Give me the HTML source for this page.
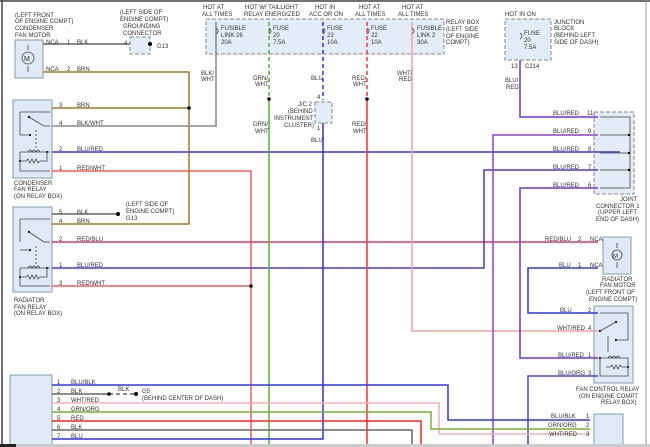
<!DOCTYPE html><html><head><style>
html,body{margin:0;padding:0;background:#fff;width:650px;height:447px;overflow:hidden}
svg{display:block}
text{font-family:"Liberation Sans",sans-serif;font-size:6px;fill:#333}
</style></head><body>
<svg width="650" height="447" viewBox="0 0 650 447">
<rect x="0" y="0" width="650" height="447" fill="#fff"/>
<line x1="2" y1="0" x2="2" y2="447" stroke="#444" stroke-width="1.5"/>
<line x1="0" y1="1" x2="650" y2="1" stroke="#444" stroke-width="1.5"/>
<line x1="646" y1="0" x2="646" y2="447" stroke="#999" stroke-width="1"/>
<g fill="#dfeaf6" stroke="#8a98a8" stroke-width="1">
<rect x="15" y="40" width="28" height="38"/>
<rect x="13" y="100" width="39" height="78"/>
<rect x="13" y="207" width="39" height="85"/>
<rect x="10" y="375" width="42" height="72"/>
<rect x="603" y="237" width="28" height="37"/>
<rect x="594" y="306" width="39" height="77"/>
<rect x="594" y="414" width="29" height="33"/>
</g>
<g fill="#e3edf7" stroke="#888" stroke-width="1" stroke-dasharray="4,2">
<rect x="206" y="19" width="238" height="35"/>
<rect x="130" y="37" width="20" height="17"/>
<rect x="505" y="19" width="46" height="41"/>
<rect x="594" y="112" width="40" height="82"/>
<rect x="315" y="102" width="17" height="21"/>
</g>
<g fill="none" stroke-width="1.5">
<path d="M43 44H130" stroke="#666"/>
<path d="M43 72H189V224H52" stroke="#a07a2a"/>
<path d="M52 108H189" stroke="#a07a2a"/>
<path d="M52 126H216V22" stroke="#888"/>
<path d="M52 152H620" stroke="#4434e8"/>
<path d="M52 171H251V444" stroke="#ff5a5a"/>
<path d="M52 214H118" stroke="#666"/>
<path d="M52 242H598" stroke="#d8386a"/>
<path d="M52 268H484V170H598" stroke="#4a34e8"/>
<path d="M52 286H251" stroke="#ff5a5a"/>
<path d="M269 22V100" stroke="#4cb030" stroke-dasharray="4,3"/>
<path d="M269 100V444" stroke="#5ab038"/>
<path d="M323 22V100" stroke="#2e2ef0" stroke-dasharray="4,3"/>
<path d="M323 123V439H52" stroke="#2e2ef0"/>
<path d="M367 22V100" stroke="#ff3030" stroke-dasharray="4,3"/>
<path d="M367 100V444" stroke="#ff3030"/>
<path d="M412 22V331H598" stroke="#f4a0a0"/>
<path d="M520 60V117H598" stroke="#6a34e0"/>
<path d="M493 444V135H598" stroke="#8a40d0"/>
<path d="M598 188H520V358H598" stroke="#6a34e0"/>
<path d="M598 268H528V313H598" stroke="#3434e8"/>
<path d="M528 444V376H598" stroke="#4a40e0"/>
<path d="M52 385H448V420H590" stroke="#3434e8"/>
<path d="M52 394H109" stroke="#666"/>
<path d="M109 394H136" stroke="#666" stroke-dasharray="4,3"/>
<path d="M52 403H439V434H590" stroke="#f4b0b0"/>
<path d="M52 412H431V429H590" stroke="#7ab030"/>
<path d="M52 421H421V444" stroke="#ff2020"/>
<path d="M52 430H412V444" stroke="#666"/>
<path d="M600 117H630V188H600M600 135H630M600 153H630M600 170H630" stroke="#666" stroke-width="1"/>
</g>
<g fill="#000">
<circle cx="189" cy="108" r="1.8"/><circle cx="251" cy="286" r="1.8"/><circle cx="269" cy="99" r="1.8"/><circle cx="367" cy="99" r="1.8"/>
<circle cx="118" cy="214" r="2"/><circle cx="109" cy="394" r="1.8"/><circle cx="136" cy="394" r="2"/><circle cx="150" cy="44" r="2"/>
<circle cx="629" cy="135" r="1.2"/><circle cx="629" cy="153" r="1.2"/><circle cx="629" cy="170" r="1.2"/>
<circle cx="29" cy="117" r="1.1"/><circle cx="30" cy="135" r="1.1"/><circle cx="47" cy="152" r="1.1"/><circle cx="20" cy="161" r="1.1"/>
<circle cx="29" cy="232" r="1.1"/><circle cx="30" cy="250" r="1.1"/><circle cx="47" cy="268" r="1.1"/><circle cx="20" cy="277" r="1.1"/>
<circle cx="600" cy="331" r="1.1"/><circle cx="616" cy="322" r="1.1"/><circle cx="616" cy="340" r="1.1"/><circle cx="600" cy="358" r="1.1"/><circle cx="628" cy="367" r="1.1"/>
</g>
<g fill="none" stroke="#444" stroke-width="0.8">
<circle cx="28" cy="58" r="6"/><path d="M28 50V45M28 66V72"/>
<circle cx="617" cy="255" r="5"/><path d="M617 248V243M617 262V268"/>
<path d="M20 112V135M20 112H50M29 117L44 126H50M30 135H20"/>
<path d="M36 130V150" stroke-dasharray="2,2"/>
<path d="M20 161V171H50M20 152H50M20 152V161M28 152q2-4 4 0q2-4 4 0q2-4 4 0M20 161H26l2-2 2 4 2-4 2 4 2-4 2 4 2-2H47V152"/>
<path d="M20 219V242M20 219H50M29 232L44 242H50M30 250H20"/>
<path d="M36 246V265" stroke-dasharray="2,2"/>
<path d="M20 277V286H50M20 268H50M20 268V277M28 268q2-4 4 0q2-4 4 0q2-4 4 0M20 277H26l2-2 2 4 2-4 2 4 2-4 2 4 2-2H47V268"/>
<path d="M600 331L616 322M600 313H628V340H616M608 336V352" />
<path d="M600 358H628V367M608 358q2-4 4 0q2-4 4 0q2-4 4 0M600 358V376H628V367H622l-2-2-2 4-2-4-2 4-2-4-2 2H606"/>
<path d="M216 28Q220 31 216 34M269 28Q273 31 269 34M323 28Q327 31 323 34M367 28Q371 31 367 34M412 28Q416 31 412 34M520 33Q524 36 520 39"/>
</g>
<text x="24" y="61" style="font-size:7px">M</text>
<text x="613" y="258" style="font-size:6px">M</text>
<g>
<text x="15" y="17">(LEFT FRONT</text><text x="15" y="23">OF ENGINE COMPT)</text><text x="15" y="30">CONDENSER</text><text x="15" y="37">FAN MOTOR</text>
<text x="120" y="14">(LEFT SIDE OF</text><text x="120" y="21">ENGINE COMPT)</text><text x="123" y="28">GROUNDING</text><text x="123" y="35">CONNECTOR</text>
<text x="46" y="44">NCA</text><text x="67" y="44">1</text><text x="77" y="44">BLK</text><text x="124" y="45">4</text><text x="157" y="48">G13</text>
<text x="46" y="71">NCA</text><text x="67" y="71">2</text><text x="77" y="71">BRN</text>
<text x="59" y="107">3</text><text x="77" y="107">BRN</text>
<text x="59" y="125">4</text><text x="77" y="125">BLK/WHT</text>
<text x="59" y="151">2</text><text x="77" y="151">BLU/RED</text>
<text x="59" y="170">1</text><text x="77" y="170">RED/WHT</text>
<text x="14" y="185">CONDENSER</text><text x="14" y="191">FAN RELAY</text><text x="14" y="198">(ON RELAY BOX)</text>
<text x="126" y="206">(LEFT SIDE OF</text><text x="126" y="213">ENGINE COMPT)</text><text x="126" y="220">G13</text>
<text x="59" y="214">5</text><text x="77" y="214">BLK</text><text x="59" y="223">4</text><text x="77" y="223">BRN</text>
<text x="59" y="241">2</text><text x="77" y="241">RED/BLU</text>
<text x="59" y="267">1</text><text x="77" y="267">BLU/RED</text>
<text x="59" y="285">3</text><text x="77" y="285">RED/WHT</text>
<text x="14" y="302">RADIATOR</text><text x="14" y="309">FAN RELAY</text><text x="14" y="315">(ON RELAY BOX)</text>
<text x="57" y="384">1</text><text x="71" y="384">BLU/BLK</text>
<text x="57" y="393">2</text><text x="71" y="393">BLK</text><text x="118" y="391">BLK</text><text x="142" y="393">G5</text><text x="142" y="400">(BEHIND CENTER OF DASH)</text>
<text x="57" y="402">3</text><text x="71" y="402">WHT/RED</text>
<text x="57" y="411">4</text><text x="71" y="411">GRN/ORG</text>
<text x="57" y="420">5</text><text x="71" y="420">RED</text>
<text x="57" y="429">6</text><text x="71" y="429">BLK</text>
<text x="57" y="438">7</text><text x="71" y="438">BLU</text>
<text x="203" y="9">HOT AT</text><text x="202" y="16">ALL TIMES</text>
<text x="245" y="9">HOT W/ TAILLIGHT</text><text x="244" y="16">RELAY ENERGIZED</text>
<text x="315" y="9">HOT IN</text><text x="309" y="16">ACC OR ON</text>
<text x="359" y="9">HOT AT</text><text x="355" y="16">ALL TIMES</text>
<text x="402" y="9">HOT AT</text><text x="398" y="16">ALL TIMES</text>
<text x="221" y="30">FUSIBLE</text><text x="221" y="37">LINK 26</text><text x="221" y="44">20A</text>
<text x="273" y="30">FUSE</text><text x="273" y="37">20</text><text x="273" y="44">7.5A</text>
<text x="327" y="30">FUSE</text><text x="327" y="37">23</text><text x="327" y="44">10A</text>
<text x="371" y="30">FUSE</text><text x="371" y="37">22</text><text x="371" y="44">10A</text>
<text x="417" y="30">FUSIBLE</text><text x="417" y="37">LINK 2</text><text x="417" y="44">30A</text>
<text x="446" y="24">RELAY BOX</text><text x="446" y="31">(LEFT SIDE</text><text x="446" y="38">OF ENGINE</text><text x="446" y="44">COMPT)</text>
<text x="201" y="75">BLK/</text><text x="201" y="81">WHT</text>
<text x="253" y="80">GRN/</text><text x="255" y="86">WHT</text><text x="253" y="126">GRN/</text><text x="255" y="133">WHT</text>
<text x="311" y="80">BLU</text><text x="311" y="142">BLU</text>
<text x="352" y="80">RED/</text><text x="353" y="86">WHT</text><text x="352" y="126">RED/</text><text x="353" y="133">WHT</text>
<text x="397" y="75">WHT/</text><text x="399" y="81">RED</text>
<text x="317" y="99">4</text><text x="317" y="130">1</text>
<text x="298" y="106">J/C 2</text><text x="288" y="113">(BEHIND</text><text x="274" y="120">INSTRUMENT</text><text x="284" y="127">CLUSTER)</text>
<text x="505" y="16">HOT IN ON</text>
<text x="524" y="35">FUSE</text><text x="524" y="42">20</text><text x="524" y="49">7.5A</text>
<text x="554" y="24">JUNCTION</text><text x="554" y="30">BLOCK</text><text x="554" y="37">(BEHIND LEFT</text><text x="554" y="44">SIDE OF DASH)</text>
<text x="511" y="68">13</text><text x="525" y="68">C214</text>
<text x="505" y="82">BLU/</text><text x="506" y="89">RED</text>
<text x="553" y="115">BLU/RED</text><text x="587" y="115">11</text>
<text x="553" y="133">BLU/RED</text><text x="588" y="133">9</text>
<text x="553" y="151">BLU/RED</text><text x="588" y="151">8</text>
<text x="553" y="169">BLU/RED</text><text x="588" y="169">7</text>
<text x="553" y="187">BLU/RED</text><text x="588" y="187">6</text>
<text x="620" y="201">JOINT</text><text x="596" y="208">CONNECTOR 1</text><text x="598" y="214">(UPPER LEFT</text><text x="596" y="221">END OF DASH)</text>
<text x="545" y="241">RED/BLU</text><text x="578" y="241">2</text><text x="590" y="241">NCA</text>
<text x="559" y="267">BLU</text><text x="578" y="267">1</text><text x="590" y="267">NCA</text>
<text x="602" y="281">RADIATOR</text><text x="600" y="287">FAN MOTOR</text><text x="586" y="294">(LEFT FRONT OF</text><text x="589" y="301">ENGINE COMPT)</text>
<text x="560" y="312">BLU</text><text x="588" y="312">2</text>
<text x="557" y="330">WHT/RED</text><text x="588" y="330">4</text>
<text x="558" y="357">BLU/RED</text><text x="588" y="357">1</text>
<text x="558" y="375">BLU/ORG</text><text x="588" y="375">3</text>
<text x="576" y="391">FAN CONTROL RELAY</text><text x="579" y="398">(ON ENGINE COMPT</text><text x="601" y="404">RELAY BOX)</text>
<text x="551" y="418">BLU/BLK</text><text x="586" y="418">1</text>
<text x="548" y="427">GRN/ORG</text><text x="586" y="427">2</text>
<text x="549" y="436">WHT/RED</text><text x="586" y="436">3</text>
</g>
<rect x="0" y="444" width="650" height="3" fill="#ccc"/>
<rect x="0" y="444" width="16" height="3" fill="#222"/>
</svg>
</body></html>
